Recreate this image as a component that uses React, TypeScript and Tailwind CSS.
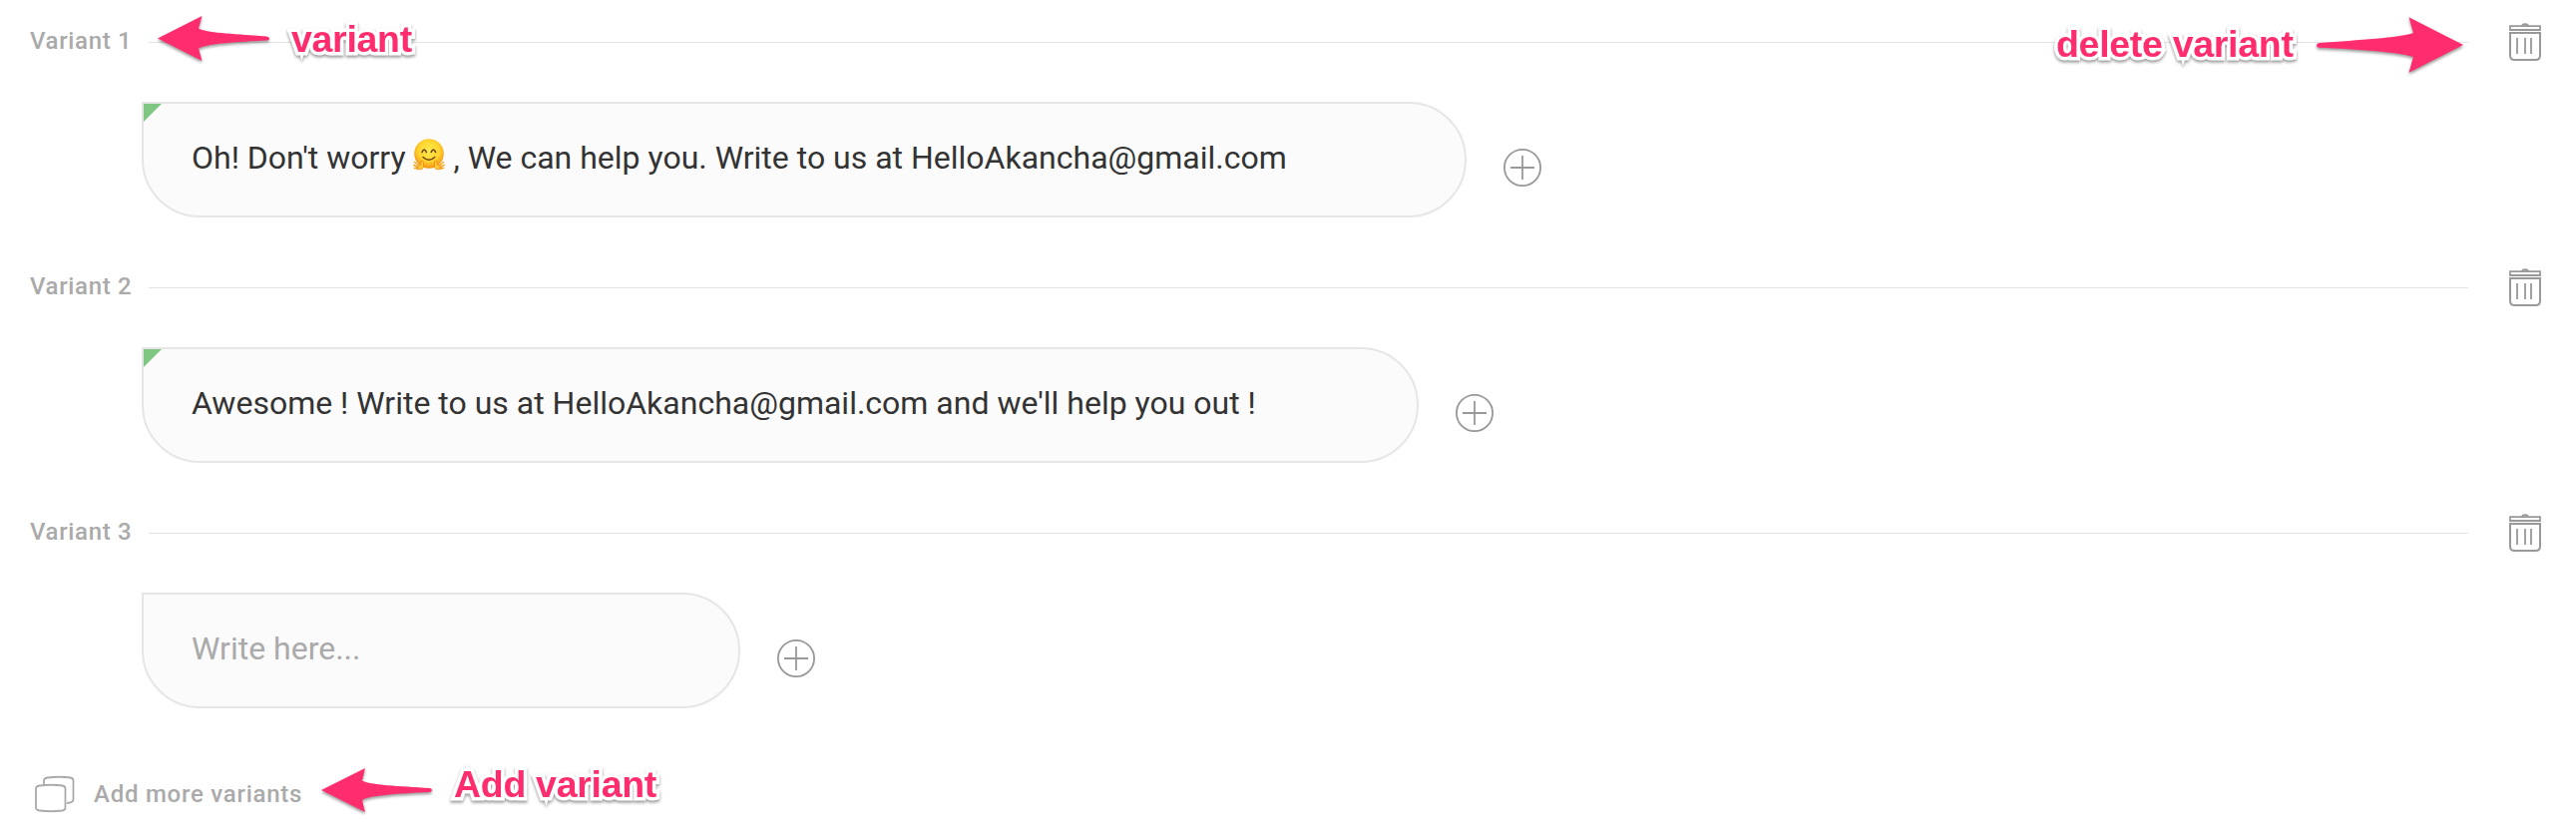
import React from "react";

function TrashIcon() {
  return (
    <svg width="34" height="40" viewBox="0 0 34 40" fill="none" stroke="#999" strokeWidth="2">
      <path d="M2 4.2H32V8H2Z" strokeWidth="1.8" />
      <path d="M14 4C14.6 1.7 19.4 1.7 20 4" strokeWidth="2" />
      <path d="M2 11H32V33.5Q32 38 27.5 38H6.500Q2 38 2 33.500Z" />
      <path d="M9 16V32M17 16V32M23 16V32" strokeWidth="1.8" />
    </svg>
  );
}

function PlusIcon() {
  return (
    <svg width="38" height="38" viewBox="0 0 38 38" fill="none" stroke="#999" strokeWidth="1.8">
      <circle cx="19" cy="19" r="18.1" />
      <path d="M7 19H31M19 7V31" />
    </svg>
  );
}

function HugEmoji() {
  return (
    <svg width="32" height="32" viewBox="0 0 32 32" className="-mb-0.5 inline-block align-baseline">
      <defs>
        <radialGradient id="face" cx="50%" cy="40%" r="60%">
          <stop offset="0" stopColor="#ffec50" />
          <stop offset="0.6" stopColor="#ffd32e" />
          <stop offset="1" stopColor="#f5900f" />
        </radialGradient>
      </defs>
      <circle cx="16" cy="15" r="14.8" fill="url(#face)" />
      <path d="M9 13.5Q11.2 8.500 13.400 13.500M18.200 13.500Q20.400 8.500 22.600 13.500" stroke="#6b4010" strokeWidth="1.6" fill="none" strokeLinecap="round" />
      <path d="M10 18.500Q15.900 24 21.800 18.500" stroke="#6b4010" strokeWidth="1.4" fill="none" strokeLinecap="round" />
      <g id="hand-left">
        <path d="M8.500 22Q10.500 21.500 10.500 24V28.500Q10 31 7 30.800L3.500 30.500Q3.500 26 7.500 26.500Z" fill="#ffc93a" stroke="#e78a12" strokeWidth="0.7" />
        <path d="M6 27L1.500 23.500M5 28.200L0.800 26.500M5 29.500L1.500 29.500" stroke="#f5a623" strokeWidth="1.5" strokeLinecap="round" />
      </g>
      <g transform="translate(32 0) scale(-1 1)">
        <path d="M8.500 22Q10.500 21.500 10.500 24V28.500Q10 31 7 30.800L3.500 30.500Q3.500 26 7.500 26.500Z" fill="#ffc93a" stroke="#e78a12" strokeWidth="0.7" />
        <path d="M6 27L1.500 23.500M5 28.200L0.800 26.500M5 29.500L1.500 29.500" stroke="#f5a623" strokeWidth="1.5" strokeLinecap="round" />
      </g>
    </svg>
  );
}

const variants: { label: string; bubble: string; placeholder?: boolean; body: React.ReactNode }[] = [
  {
    label: "Variant 1",
    bubble: "w-[1328px]",
    body: <>Oh! Don't worry <HugEmoji /> , We can help you. Write to us at HelloAkancha@gmail.com</>,
  },
  {
    label: "Variant 2",
    bubble: "w-[1280px]",
    body: "Awesome ! Write to us at HelloAkancha@gmail.com and we'll help you out !",
  },
  { label: "Variant 3", bubble: "w-[600px]", placeholder: true, body: "Write here..." },
];

const notes = [
  { text: "variant", place: "left-[292px] top-[18px]" },
  { text: "delete variant", place: "left-[2061px] top-[23px]" },
  { text: "Add variant", place: "left-[455px] top-[765px]" },
];

export default function App() {
  return (
    <div className="relative h-[842px] w-[2582px] overflow-hidden bg-white font-['Roboto',sans-serif]">
      {variants.map((v) => (
        <section key={v.label} className="h-[246px]">
          <div className="flex h-[102px] items-start">
            <div className="mt-[25px] w-[149px] shrink-0 pl-[30px] text-2xl font-medium tracking-[0.65px] whitespace-nowrap text-[#aaa]">{v.label}</div>
            <div className="mt-[42px] h-px w-[2325px] bg-[#e4e4e4]" />
            <button className="mt-[22px] ml-10"><TrashIcon /></button>
          </div>
          <div className="flex items-start pl-[142px]">
            <div className={`relative flex h-[116px] shrink-0 items-center rounded-[58px] rounded-tl-none border-2 border-[#e6e6e6] bg-[#fbfbfb] pb-1 pl-12 text-[32px] leading-[48px] whitespace-nowrap ${v.placeholder ? "text-[#aaa]" : "text-[#333]"} ${v.bubble}`}>
              {!v.placeholder && <svg className="absolute top-0 left-0" width="18" height="18"><path d="M0 0H18L0 18Z" fill="#81c784" /></svg>}
              <span>{v.body}</span>
            </div>
            <button className="mt-[47px] ml-[37px]"><PlusIcon /></button>
          </div>
        </section>
      ))}
      <button className="mt-[38px] ml-[34px] flex items-center text-2xl font-medium text-[#aaa]">
        <svg width="42" height="40" viewBox="0 0 42 40" fill="none" stroke="#aaa" strokeWidth="1.8">
          <path d="M2 14.500Q2 12 5.500 11.500Q17 10 28.500 11.500Q31.500 12 31.500 14.500V33.500Q31.500 36 28.500 36.500Q17 38 5.500 36.500Q2 36 2 33.500Z" />
          <path d="M10 11V6.500Q10 4 13.500 3.500Q25 2 36.500 3.500Q39.500 4 39.500 6.500V25.500Q39.500 28.500 33 29" />
        </svg>
        <span className="ml-[18px] tracking-[0.75px]">Add more variants</span>
      </button>
      <svg className="absolute top-0 left-0" width="2582" height="842" fill="#ff2d6e">
        <g className="drop-shadow-[0_2px_1.5px_rgba(0,0,0,0.4)]">
          <path d="M158 38.500L202.500 16L199 28.500C207 33 235 34 267 36.500Q270 37 270 38.500Q270 40.500 267 40.500C235 42 207 44 199 48.500L202.500 61Z" />
          <path d="M2469 45L2414.500 17.300L2419 33C2404 38 2365 40 2325 43Q2322 43.500 2322 45.500Q2322 47.700 2325 47.700C2365 49.500 2404 52 2419 57L2414.500 72.700Z" />
          <path d="M322 792L366 770L363 782.500C371 787 399 788 431 790Q433 790.500 433 792Q433 793.500 431 794C399 795.500 371 797 363 802L366 814Z" />
        </g>
      </svg>
      {notes.map((n) => (
        <div key={n.text} className={`absolute font-['Liberation_Sans',sans-serif] text-[37.5px] leading-[42px] font-bold tracking-[-0.3px] whitespace-nowrap text-[#ff2d6e] [-webkit-text-stroke:7px_white] [paint-order:stroke_fill] drop-shadow-[0_2px_1.5px_rgba(0,0,0,0.4)] ${n.place}`}>{n.text}</div>
      ))}
    </div>
  );
}
